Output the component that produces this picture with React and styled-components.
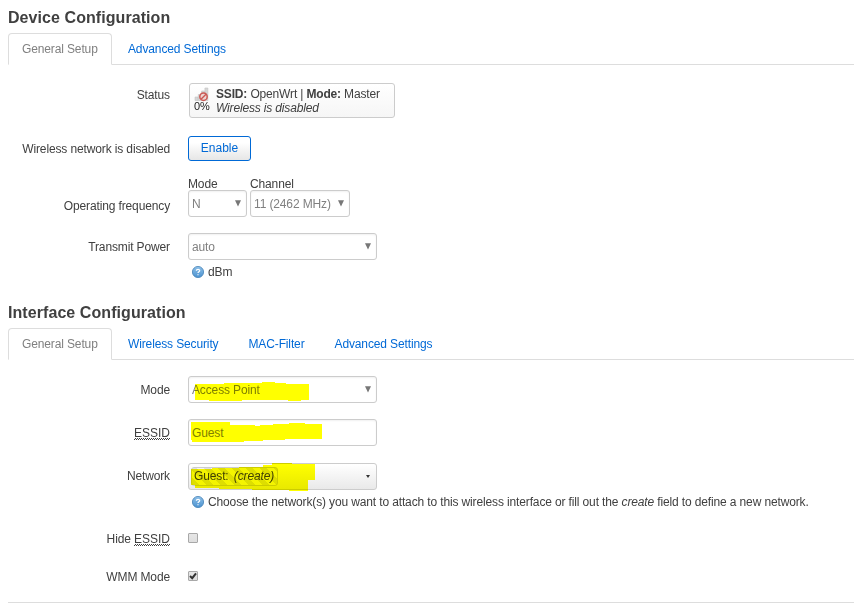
import React from "react";
import styled, { createGlobalStyle, css } from "styled-components";

const GlobalStyle = createGlobalStyle`
  * { box-sizing: border-box; }
  body {
    margin: 0;
    background: #fff;
    color: #404040;
    font: 12px/18px "Liberation Sans", Arial, sans-serif;
    letter-spacing: -0.13px;
    overflow: hidden;
  }
`;

const Page = styled.main`
  width: 854px;
  height: 603px;
  padding-left: 8px;
  overflow: hidden;
`;

const Section = styled.section`
  height: ${(p) => p.$height}px;
  padding-top: ${(p) => p.$top}px;
  ${(p) => p.$ruled && "border-bottom: 1px solid #ddd;"}
`;

const Heading = styled.h3`
  margin: 0 0 5px;
  height: 20px;
  font-size: 16px;
  line-height: 20px;
  font-weight: bold;
  color: #404040;
  letter-spacing: 0.07px;
  white-space: nowrap;
`;

const Tabs = styled.nav`
  display: flex;
  gap: 2px;
  height: 32px;
  border-bottom: 1px solid #ddd;
`;

const Tab = styled.a`
  height: 32px;
  padding: 0 13px;
  line-height: 30px;
  border: 1px solid transparent;
  border-radius: 4px 4px 0 0;
  color: #0069d6;
  white-space: nowrap;
  ${(p) => p.$active && css`
    width: 104px;
    color: #808080;
    background: #fff;
    border-color: #ddd;
    border-bottom-color: #fff;
  `}
`;

const Fields = styled.div`
  padding-top: ${(p) => p.$top}px;
`;

const Row = styled.div`
  display: flex;
  gap: 18px;
  height: ${(p) => p.$height}px;
`;

const Label = styled.label`
  width: 162px;
  padding-top: ${(p) => p.$top}px;
  text-align: right;
  white-space: nowrap;
`;

const Control = styled.div`
  position: relative;
  display: flex;
  flex-direction: column;
  align-items: flex-start;
`;

const Abbr = styled.abbr`
  display: inline-block;
  height: 16px;
  line-height: 18px;
  letter-spacing: 0;
  text-decoration: none;
  background: repeating-conic-gradient(#404040 0 25%, transparent 0 50%) 0 100% / 2px 2px repeat-x;
`;

const Badge = styled.div`
  display: flex;
  gap: 5px;
  width: 206px;
  height: 35px;
  margin-left: 1px;
  padding: 3px 4px;
  border: 1px solid #ccc;
  border-radius: 3px;
  background: linear-gradient(#fff, #f6f6f6);
  line-height: 14px;
  letter-spacing: -0.16px;
  white-space: nowrap;
`;

const Signal = styled.div`
  width: 17px;
  font-size: 11px;
  line-height: 11px;
  letter-spacing: 0;
  color: #222;
  svg { display: block; margin-bottom: -2px; }
`;

const Button = styled.button`
  width: 63px;
  height: 25px;
  padding: 0 0 2px;
  border: 1px solid #0069d6;
  border-radius: 3px;
  background: linear-gradient(#fff 25%, #e6e6e6);
  color: #0069d6;
  font: inherit;
  letter-spacing: 0;
`;

const Pair = styled.div`
  display: flex;
  gap: 3px;
`;

const Stacked = styled.div`
  display: flex;
  flex-direction: column;
  height: 40px;
  line-height: 15px;
`;

const Caption = styled.span`
  height: 13px;
`;

const Box = styled.div`
  display: flex;
  flex-shrink: 0;
  align-items: center;
  justify-content: space-between;
  width: ${(p) => p.$width || 189}px;
  height: 27px;
  padding: 0 ${(p) => (p.$tight ? 5 : 4)}px 0 3px;
  border: 1px solid #ccc;
  border-radius: 3px;
  background: ${(p) => (p.$shaded ? "linear-gradient(#fff, #e9e9e9)" : "#fff")};
  box-shadow: ${(p) => (p.$shaded ? "none" : "inset 0 1px 2px rgba(0,0,0,.06)")};
  color: #808080;
  line-height: 25px;
  white-space: nowrap;
`;

const Value = styled.span`
  padding-top: 2px;
`;

const Hint = styled.div`
  display: flex;
  align-items: center;
  gap: 4px;
  height: 18px;
  margin-top: ${(p) => p.$top}px;
  padding-left: 4px;
  letter-spacing: -0.135px;
  white-space: nowrap;
`;

const Chip = styled.span`
  width: 87px;
  height: 19px;
  padding-left: 2px;
  margin-left: -1px;
  border: 1px solid #ccc;
  border-radius: 3px;
  background: repeating-linear-gradient(45deg, #dedede 0 5px, #f4f4f4 5px 10px);
  color: #404040;
  line-height: 17px;
  em { margin-left: 2px; }
`;

const Marker = styled.svg`
  position: absolute;
  left: 0;
  top: -4px;
  mix-blend-mode: multiply;
  pointer-events: none;
`;

const Check = styled.span`
  display: grid;
  place-items: center;
  width: 10px;
  height: 10px;
  margin-top: 3px;
  border: 1px solid #a8a8a8;
  border-radius: 1px;
  background: linear-gradient(#e6e6e6, #dedede);
`;

const Arrow = ({ small }) => small ? (
  <svg width="6" height="4"><path d="M1 0h4L3 3z" fill="#333" /></svg>
) : (
  <svg width="8" height="9"><path d="M1 1.3h6L4 7.6z" fill="#777" /></svg>
);

const Help = () => (
  <svg width="12" height="12" viewBox="0 0 12 12">
    <defs>
      <linearGradient id="blue" x2="0" y2="1">
        <stop stopColor="#8fc0e8" /><stop offset="1" stopColor="#4a92d0" />
      </linearGradient>
    </defs>
    <circle cx="6" cy="6" r="5.6" fill="url(#blue)" stroke="#4583b8" strokeWidth=".8" />
    <path d="M4.3 4.7C4.4 2.8 7.8 2.9 7.7 4.7C7.6 5.9 6 5.8 6 7.1M6 8.2V9.2" fill="none" stroke="#fff" strokeWidth="1.2" />
  </svg>
);

const SignalIcon = () => (
  <svg width="16" height="16" viewBox="0 0 16 16">
    <path d="M1 10h3v3.5h-3zM4.3 7.5h3v6h-3zM7.6 4h3v9.5h-3zM10.9 1h3v12.5h-3z" fill="#d6d6d6" stroke="#c4c4c4" strokeWidth=".6" />
    <circle cx="9.5" cy="9.7" r="3.7" fill="#ecd5d3" stroke="#cb5a55" strokeWidth="1.5" />
    <path d="M7 12.2L12 7.2" stroke="#cb5a55" strokeWidth="1.5" />
  </svg>
);

const Highlight = ({ d }) => (
  <Marker width="189" height="36"><path d={d} fill="#ff0" /></Marker>
);

export default function App() {
  return (
    <>
      <GlobalStyle />
      <Page>
        <Section $height={295} $top={8}>
          <Heading>Device Configuration</Heading>
          <Tabs>
            <Tab $active>General Setup</Tab>
            <Tab>Advanced Settings</Tab>
          </Tabs>
          <Fields $top={18}>
            <Row $height={53}>
              <Label $top={3}>Status</Label>
              <Control>
                <Badge>
                  <Signal><SignalIcon />0%</Signal>
                  <div>
                    <b>SSID:</b> OpenWrt | <b>Mode:</b> Master<br />
                    <em>Wireless is disabled</em>
                  </div>
                </Badge>
              </Control>
            </Row>
            <Row $height={41}>
              <Label $top={4}>Wireless network is disabled</Label>
              <Control><Button>Enable</Button></Control>
            </Row>
            <Row $height={56}>
              <Label $top={20}>Operating frequency</Label>
              <Control>
                <Pair>
                  <Stacked><Caption>Mode</Caption><Box $width={59}><Value>N</Value><Arrow /></Box></Stacked>
                  <Stacked><Caption>Channel</Caption><Box $width={100}><Value>11 (2462 MHz)</Value><Arrow /></Box></Stacked>
                </Pair>
              </Control>
            </Row>
            <Row $height={50}>
              <Label $top={5}>Transmit Power</Label>
              <Control>
                <Box><Value>auto</Value><Arrow /></Box>
                <Hint $top={3}><Help />dBm</Hint>
              </Control>
            </Row>
          </Fields>
        </Section>
        <Section $height={308} $top={8} $ruled>
          <Heading>Interface Configuration</Heading>
          <Tabs>
            <Tab $active>General Setup</Tab>
            <Tab>Wireless Security</Tab>
            <Tab>MAC-Filter</Tab>
            <Tab>Advanced Settings</Tab>
          </Tabs>
          <Fields $top={16}>
            <Row $height={43}>
              <Label $top={5}>Mode</Label>
              <Control>
                <Box><Value>Access Point</Value><Arrow /></Box>
                <Highlight d="M7 12H36V11H74V10H87V11H98V12H121V28H113V29H100V28H54V29H21V28H7Z" />
              </Control>
            </Row>
            <Row $height={44}>
              <Label $top={5}><Abbr>ESSID</Abbr></Label>
              <Control>
                <Box><Value>Guest</Value></Box>
                <Highlight d="M3 7H42V10H67V11H72V10H85V9H101V8H117V9H134V24H97V25H75V26H56V27H4V25H3Z" />
              </Control>
            </Row>
            <Row $height={67}>
              <Label $top={4}>Network</Label>
              <Control>
                <Box $shaded $tight><Chip>Guest: <em>(create)</em></Chip><Arrow small /></Box>
                <Highlight d="M3 10H24V9H51V8H75V6H84V4H104V5H127V21H120V32H101V31H64V30H31V29H7V26H3Z" />
                <Hint $top={3}>
                  <Help /><span>Choose the network(s) you want to attach to this wireless interface or fill out the <em>create</em> field to define a new network.</span>
                </Hint>
              </Control>
            </Row>
            <Row $height={38}>
              <Label>Hide <Abbr>ESSID</Abbr></Label>
              <Control><Check /></Control>
            </Row>
            <Row $height={30}>
              <Label>WMM Mode</Label>
              <Control>
                <Check><svg width="8" height="8"><path d="M1 4L3.2 6.2L7 1.3" fill="none" stroke="#333" strokeWidth="2" /></svg></Check>
              </Control>
            </Row>
          </Fields>
        </Section>
      </Page>
    </>
  );
}
